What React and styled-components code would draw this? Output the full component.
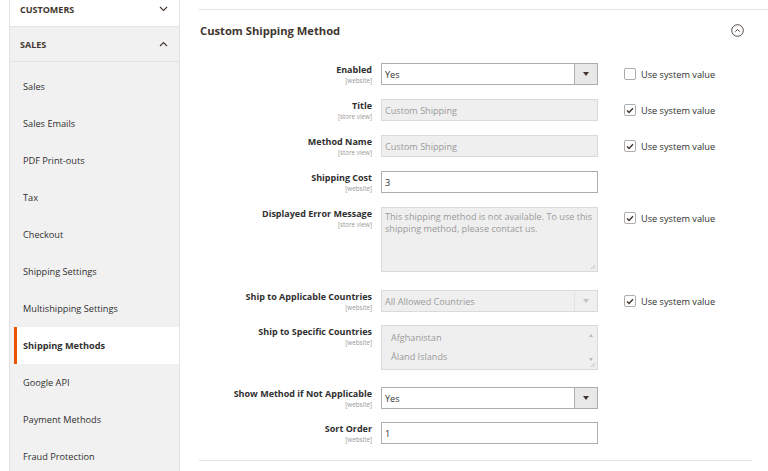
import React from 'react'
import styled, { createGlobalStyle } from 'styled-components'

const GlobalStyle = createGlobalStyle`
  html, body {
    margin: 0;
    padding: 0;
    background: #fff;
    overflow: hidden;
  }
  body {
    font-family: "Open Sans", "Liberation Sans", sans-serif;
    color: #303030;
  }
`

const Page = styled.div`
  display: flex;
  align-items: flex-start;
  width: 768px;
  height: 471px;
  overflow: hidden;
  padding-left: 9px;
  box-sizing: border-box;
`

const Sidebar = styled.nav`
  width: 171px;
  flex: none;
  margin-top: -8px;
  background: #f1f1f1;
  border-right: 1px solid #e3e3e3;
  border-left: 1px solid #e3e3e3;
  box-sizing: border-box;
  padding-bottom: 40px;
`

const Section = styled.div`
  display: flex;
  align-items: center;
  justify-content: space-between;
  height: 34px;
  padding: 0 11px 0 10px;
  background: ${p => (p.$open ? '#f1f1f1' : '#fff')};
  border-bottom: 1px solid #e3e3e3;
  font-size: 9px;
  font-weight: 700;
  text-transform: uppercase;
  color: #41362f;
`

const List = styled.ul`
  list-style: none;
  margin: 0;
  padding: 6px 0 0;
`

const Item = styled.li`
  height: 37px;
  display: flex;
  align-items: center;
  font-size: 9.2px;
  color: #303030;
  box-sizing: border-box;
  padding-left: 13px;
  ${p => p.$active && `
    background: #fff;
    margin-left: 4px;
    border-left: 3px solid #eb5202;
    padding-left: 6px;
    font-weight: 700;
  `}
`

const Main = styled.main`
  flex: 1;
  margin-left: 19px;
  padding-top: 9px;
`

const Fieldset = styled.section`
  border-top: 1px solid #e3e3e3;
`

const Heading = styled.div`
  display: flex;
  align-items: center;
  justify-content: space-between;
  height: 40px;
  padding: 0 24px 0 1px;
  font-size: 11.2px;
  font-weight: 700;
  color: #41362f;
`

const Form = styled.div`
  padding-top: 13px;
  margin-right: 16px;
  padding-bottom: 16px;
  border-bottom: 1px solid #e3e3e3;
`

const Row = styled.div`
  display: grid;
  grid-template-columns: 173px 217px 1fr;
  column-gap: 9px;
  align-items: start;
  margin-bottom: ${p => p.$gap ?? 14}px;
`

const LabelCell = styled.div`
  text-align: right;
  padding-top: 1px;
  height: 21px;
`

const LabelText = styled.div`
  font-size: 9px;
  font-weight: 700;
  line-height: 12px;
  color: #303030;
`

const Scope = styled.div`
  font-size: 6.3px;
  line-height: 9px;
  color: #999;
`

const Box = styled.div`
  position: relative;
  height: ${p => p.$h || 22}px;
  box-sizing: border-box;
  border: 1px solid ${p => (p.$disabled ? '#dadada' : '#adadad')};
  background: ${p => (p.$disabled ? '#efefef' : '#fff')};
  color: ${p => (p.$disabled ? '#9a9a9a' : '#303030')};
  font-size: 9.1px;
  padding: 0 3px;
  display: flex;
  align-items: center;
`

const TextBox = styled(Box)`
  align-items: flex-start;
  padding: 3px 3px;
  line-height: 11.5px;
`

const ListBox = styled(Box)`
  flex-direction: column;
  align-items: flex-start;
  justify-content: center;
  gap: 7px;
  padding-left: 9px;
  line-height: 12px;
`

const ArrowButton = styled.span`
  position: absolute;
  right: 0;
  top: 0;
  bottom: 0;
  width: 22px;
  display: flex;
  align-items: center;
  justify-content: center;
  border-left: 1px solid ${p => (p.$disabled ? '#e3e3e3' : '#adadad')};
  background: ${p => (p.$disabled ? '#efefef' : '#e8e8e8')};
  &::after {
    content: '';
    border-left: 3px solid transparent;
    border-right: 3px solid transparent;
    border-top: 4px solid ${p => (p.$disabled ? '#c2c2c2' : '#41362f')};
  }
`

const Grip = styled.svg`
  position: absolute;
  right: 1px;
  bottom: 1px;
`

const ScrollArrow = styled.span`
  position: absolute;
  right: 4px;
  top: ${p => p.$top}px;
  width: 0;
  height: 0;
  border-left: 2px solid transparent;
  border-right: 2px solid transparent;
  ${p => (p.$up ? 'border-bottom' : 'border-top')}: 3px solid #b8b8b8;
`

const SystemCell = styled.label`
  display: flex;
  align-items: center;
  gap: 5px;
  margin-left: 17px;
  height: 22px;
  font-size: 9.2px;
  color: #303030;
`

const Check = styled.span`
  width: 10px;
  height: 10px;
  border: 1px solid #adadad;
  border-radius: 2px;
  background: #fff;
  display: flex;
  align-items: center;
  justify-content: center;
`

const Chevron = ({ up }) => (
  <svg width="9" height="6" viewBox="0 0 9 6">
    <path d={up ? 'M1 5L4.5 1.5L8 5' : 'M1 1L4.5 4.5L8 1'} fill="none" stroke="#41362f" strokeWidth="1.1" />
  </svg>
)

const CheckBox = ({ checked }) => (
  <Check>
    {checked && (
      <svg width="8" height="7" viewBox="0 0 8 7">
        <path d="M1 3.5L3 5.5L7 1.2" fill="none" stroke="#41362f" strokeWidth="1.4" />
      </svg>
    )}
  </Check>
)

const Field = ({ label, scope, children, system, gap }) => (
  <Row $gap={gap}>
    <LabelCell>
      <LabelText>{label}</LabelText>
      <Scope>[{scope}]</Scope>
    </LabelCell>
    {children}
    {system !== undefined ? (
      <SystemCell>
        <CheckBox checked={system} />
        Use system value
      </SystemCell>
    ) : <span />}
  </Row>
)

const ResizeGrip = () => (
  <Grip width="6" height="6" viewBox="0 0 6 6">
    <path d="M5 1L1 5M5 3.5L3.5 5" stroke="#b5b5b5" strokeWidth="0.8" />
  </Grip>
)

const items = [
  'Sales', 'Sales Emails', 'PDF Print-outs', 'Tax', 'Checkout', 'Shipping Settings',
  'Multishipping Settings', 'Shipping Methods', 'Google API', 'Payment Methods', 'Fraud Protection'
]

export default function App() {
  return (
    <>
      <GlobalStyle />
      <Page>
        <Sidebar>
          <Section>Customers<Chevron /></Section>
          <Section $open>Sales<Chevron up /></Section>
          <List>
            {items.map(i => (
              <Item key={i} $active={i === 'Shipping Methods'}>{i}</Item>
            ))}
          </List>
        </Sidebar>
        <Main>
          <Fieldset>
            <Heading>
              Custom Shipping Method
              <svg width="13" height="13" viewBox="0 0 13 13">
                <circle cx="6.5" cy="6.5" r="5.8" fill="none" stroke="#41362f" strokeWidth="0.9" />
                <path d="M4.3 7.6L6.5 5.4L8.7 7.6" fill="none" stroke="#41362f" strokeWidth="1" />
              </svg>
            </Heading>
            <Form>
              <Field label="Enabled" scope="website" system={false}>
                <Box>Yes<ArrowButton /></Box>
              </Field>
              <Field label="Title" scope="store view" system>
                <Box $disabled>Custom Shipping</Box>
              </Field>
              <Field label="Method Name" scope="store view" system>
                <Box $disabled>Custom Shipping</Box>
              </Field>
              <Field label="Shipping Cost" scope="website">
                <Box>3</Box>
              </Field>
              <Field label="Displayed Error Message" scope="store view" system gap={18}>
                <TextBox $disabled $h={65}>
                  This shipping method is not available. To use this shipping method, please contact us.
                  <ResizeGrip />
                </TextBox>
              </Field>
              <Field label="Ship to Applicable Countries" scope="website" system gap={13}>
                <Box $disabled>All Allowed Countries<ArrowButton $disabled /></Box>
              </Field>
              <Field label="Ship to Specific Countries" scope="website" gap={17}>
                <ListBox $disabled $h={45}>
                  <span>Afghanistan</span>
                  <span>Åland Islands</span>
                  <ScrollArrow $up $top={8} />
                  <ScrollArrow $top={32} />
                  <ResizeGrip />
                </ListBox>
              </Field>
              <Field label="Show Method if Not Applicable" scope="website" gap={13}>
                <Box>Yes<ArrowButton /></Box>
              </Field>
              <Field label="Sort Order" scope="website" gap={0}>
                <Box>1</Box>
              </Field>
            </Form>
          </Fieldset>
        </Main>
      </Page>
    </>
  )
}
